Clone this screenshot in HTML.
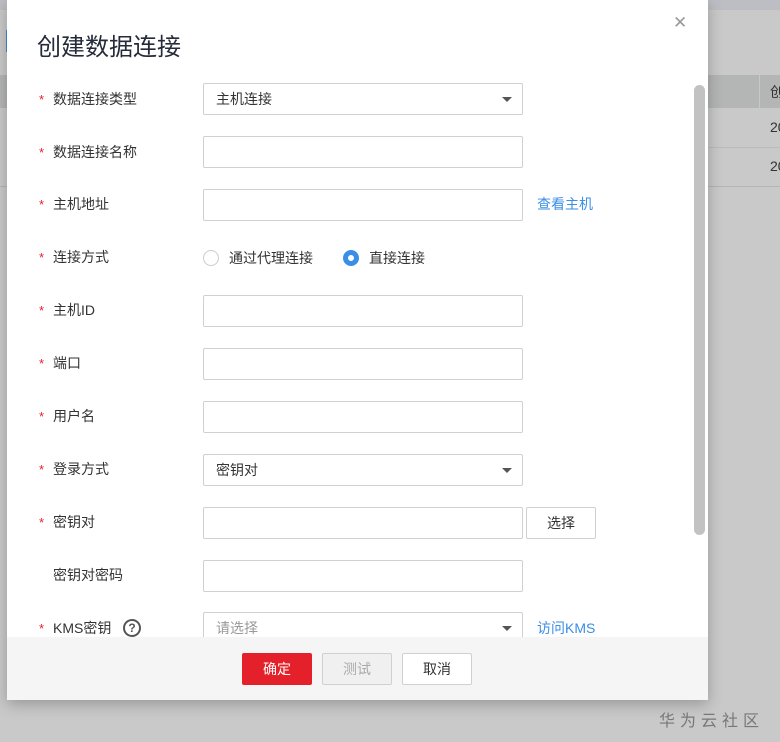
<!DOCTYPE html>
<html><head><meta charset="utf-8"><style>
*{box-sizing:border-box;margin:0;padding:0}
body{width:780px;height:742px;background:#c9c9c9;position:relative;overflow:hidden;font-family:"Liberation Sans","Noto Sans CJK SC",sans-serif;font-size:14px;color:#252b3a}
.abs{position:absolute}
.dlg{left:7px;top:0;width:701px;height:700px;background:#fff;box-shadow:0 4px 14px rgba(0,0,0,.25)}
.lbl{position:absolute;left:39px;font-size:14px;color:#333;line-height:20px}
.lbl i{color:#e4212b;font-style:normal;display:inline-block;width:14px;font-size:13px}
.inp{position:absolute;left:203px;width:320px;height:32px;border:1px solid #cfd0d3;border-radius:2px;background:#fff;font-size:14px;padding-left:12px;line-height:30px;color:#333}
.arr{position:absolute;right:10px;top:13px;border-left:5px solid transparent;border-right:5px solid transparent;border-top:5px solid #555}
.lnk{position:absolute;left:537px;color:#3a8ee6;font-size:14px}
.btn{position:absolute;top:653px;width:70px;height:32px;border:1px solid #cfd0d3;border-radius:2px;text-align:center;line-height:30px;font-size:14px}
</style></head><body>
<div class="abs" style="left:0;top:0;width:780px;height:10px;background:#bdbec4"></div>
<div class="abs" style="left:708px;top:75px;width:72px;height:33px;background:#b4b6b6"></div>
<div class="abs" style="left:759px;top:75px;width:1px;height:33px;background:#c8c8c8"></div>
<div class="abs" style="left:770px;top:82px;font-size:14px;color:#333">创</div>
<div class="abs" style="left:770px;top:119px;font-size:14px;color:#333">20</div>
<div class="abs" style="left:708px;top:147px;width:72px;height:1px;background:#bbb"></div>
<div class="abs" style="left:770px;top:158px;font-size:14px;color:#333">20</div>
<div class="abs" style="left:708px;top:186px;width:72px;height:1px;background:#b5b5b5"></div>
<div class="abs" style="left:0;top:75px;width:7px;height:33px;background:#b4b6b6"></div>
<div class="abs" style="left:0;top:186px;width:7px;height:1px;background:#b5b5b5"></div>
<div class="abs" style="left:6px;top:30px;width:3px;height:22px;background:#3a8ee6"></div>
<div class="abs dlg">
  <div class="abs" style="left:30px;top:27px;font-size:24px;color:#252b3a">创建数据连接</div>
  <div class="abs" style="left:666px;top:13px;font-size:17px;color:#999">✕</div>
  <div class="abs" style="left:687px;top:85px;width:11px;height:450px;background:#c2c2c2;border-radius:6px"></div>
</div>
<div class="lbl" style="top:89px"><i>*</i>数据连接类型</div>
<div class="inp" style="top:83px">主机连接<span class="arr"></span></div>
<div class="lbl" style="top:142px"><i>*</i>数据连接名称</div>
<div class="inp" style="top:136px"></div>
<div class="lbl" style="top:194px"><i>*</i>主机地址</div>
<div class="inp" style="top:189px"></div>
<div class="lnk" style="top:194px">查看主机</div>
<div class="lbl" style="top:247px"><i>*</i>连接方式</div>
<div class="abs" style="left:203px;top:250px;width:16px;height:16px;border:1px solid #ccc;border-radius:50%"></div>
<div class="abs" style="left:229px;top:248px;color:#333">通过代理连接</div>
<div class="abs" style="left:343px;top:250px;width:16px;height:16px;border:5px solid #3a8ee6;border-radius:50%;background:#fff"></div>
<div class="abs" style="left:369px;top:248px;color:#333">直接连接</div>
<div class="lbl" style="top:300px"><i>*</i>主机ID</div>
<div class="inp" style="top:295px"></div>
<div class="lbl" style="top:353px"><i>*</i>端口</div>
<div class="inp" style="top:348px"></div>
<div class="lbl" style="top:406px"><i>*</i>用户名</div>
<div class="inp" style="top:401px"></div>
<div class="lbl" style="top:459px"><i>*</i>登录方式</div>
<div class="inp" style="top:454px">密钥对<span class="arr"></span></div>
<div class="lbl" style="top:512px"><i>*</i>密钥对</div>
<div class="inp" style="top:507px"></div>
<div class="abs" style="left:526px;top:507px;width:70px;height:32px;border:1px solid #cfd0d3;border-radius:2px;text-align:center;line-height:30px;color:#333">选择</div>
<div class="lbl" style="top:565px;left:53px">密钥对密码</div>
<div class="inp" style="top:560px"></div>
<div class="lbl" style="top:618px"><i>*</i>KMS密钥</div>
<div class="abs" style="left:123px;top:619px;width:18px;height:18px;border:2px solid #555;border-radius:50%;font-size:12px;font-weight:bold;text-align:center;line-height:14px;color:#555">?</div>
<div class="inp" style="top:612px;color:#999">请选择<span class="arr"></span></div>
<div class="lnk" style="top:618px">访问KMS</div>
<div class="abs" style="left:7px;top:637px;width:701px;height:63px;background:#f5f5f5"></div>
<div class="btn" style="left:242px;background:#e4212b;border-color:#e4212b;color:#fff">确定</div>
<div class="btn" style="left:322px;background:#f0f0f0;color:#aaa">测试</div>
<div class="btn" style="left:402px;background:#fff;color:#333">取消</div>
<div class="abs" style="left:659px;top:707px;font-size:16px;color:#777;letter-spacing:5px">华为云社区</div>
</body></html>
